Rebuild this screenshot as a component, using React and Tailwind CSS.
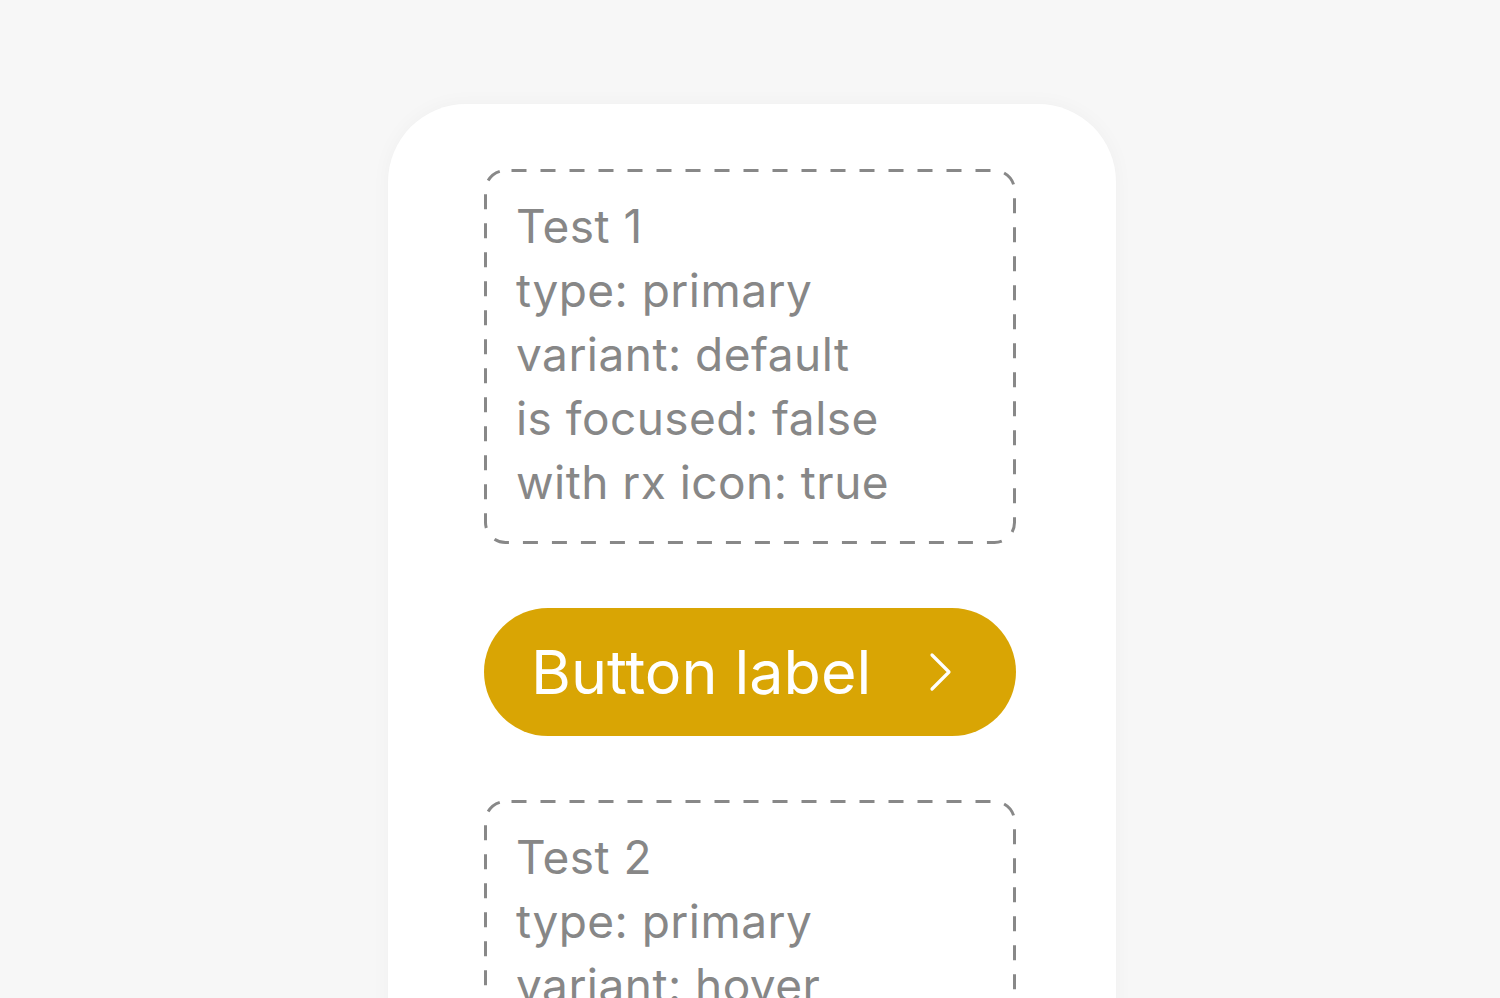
import React from "react";

function DashedBox({ title, lines }) {
  return (
    <div className="relative w-full pl-[32px] pr-[30px] pt-[25px] pb-[30px]">
      <svg className="pointer-events-none absolute inset-0 h-full w-full" aria-hidden="true">
        <rect
          x="1.5"
          y="1.5"
          rx="20"
          ry="20"
          className="h-[calc(100%-3px)] w-[calc(100%-3px)]"
          fill="none"
          stroke="#888888"
          strokeWidth="3"
          strokeDasharray="15 14"
          strokeDashoffset="-6"
        />
      </svg>
      <div className="text-[46px] leading-[64px] tracking-[0.01em] text-[#878787] [font-family:Inter,'Noto_Sans',sans-serif]">
        <div>{title}</div>
        {lines.map((l) => (
          <div key={l}>{l}</div>
        ))}
      </div>
    </div>
  );
}

export default function App() {
  return (
    <div className="h-[998px] w-full overflow-hidden bg-[#f7f7f7] pl-[388px] pt-[104px]">
      <div className="flex min-h-[960px] w-[728px] flex-col gap-[64px] rounded-t-[78px] bg-white pl-[96px] pr-[100px] pt-[65px] shadow-[0_0_20px_rgba(0,0,0,0.035)]">
        <DashedBox
          title="Test 1"
          lines={["type: primary", "variant: default", "is focused: false", "with rx icon: true"]}
        />
        <button className="flex h-[128px] w-full items-center rounded-full bg-[#d9a504] pl-[47px] text-white">
          <span className="text-[61px] leading-none tracking-[0em] [font-family:Inter,'Noto_Sans',sans-serif]">
            Button label
          </span>
          <svg className="ml-[58px]" width="24" height="40" viewBox="0 0 24 40" fill="none">
            <polyline
              points="3,3 20,20 3,37"
              stroke="white"
              strokeWidth="3.2"
              strokeLinecap="round"
              strokeLinejoin="round"
            />
          </svg>
        </button>
        <DashedBox
          title="Test 2"
          lines={["type: primary", "variant: hover", "is focused: false", "with rx icon: true"]}
        />
      </div>
    </div>
  );
}
